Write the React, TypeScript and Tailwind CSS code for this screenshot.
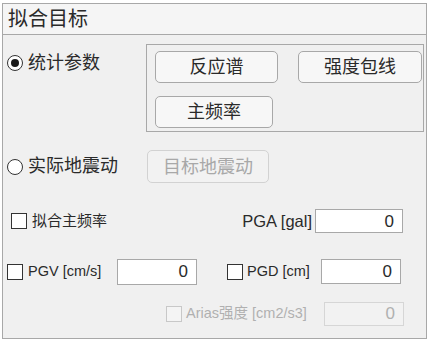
import React from 'react';

const font = "font-['Liberation_Sans','Noto_Sans_CJK_SC',sans-serif]";

function Radio({ checked }: { checked?: boolean }) {
  return (
    <div className="w-[16px] h-[16px] rounded-full border border-[#333] bg-white flex items-center justify-center shrink-0">
      {checked && <div className="w-[8px] h-[8px] rounded-full bg-[#1a1a1a]" />}
    </div>
  );
}

function Check({ disabled }: { disabled?: boolean }) {
  return (
    <div
      className={
        'w-[16px] h-[16px] border shrink-0 ' +
        (disabled ? 'border-[#c8c8c8] bg-[#f4f4f4]' : 'border-[#333] bg-white')
      }
    />
  );
}

function Btn({ label, w, h = 32, disabled }: { label: string; w: number; h?: number; disabled?: boolean }) {
  return (
    <div
      style={{ width: w, height: h }}
      className={
        'rounded-[5px] border flex items-center justify-center text-[18px] leading-none ' +
        (disabled ? 'border-[#d2d2d2] text-[#a8a8a8] bg-[#f2f2f2]' : 'border-[#a8a8a8] text-[#2a2a2a] bg-[#f7f7f7]')
      }
    >
      {label}
    </div>
  );
}

function Field({ w, h = 25, disabled }: { w: number; h?: number; disabled?: boolean }) {
  return (
    <div
      style={{ width: w, height: h }}
      className={
        'border flex items-center justify-end pr-[8px] text-[17px] ' +
        (disabled ? 'border-[#d6d6d6] bg-[#f2f2f2] text-[#b0b0b0]' : 'border-[#a8a8a8] bg-white text-[#2a2a2a]')
      }
    >
      0
    </div>
  );
}

export default function App() {
  return (
    <div className={`w-[435px] h-[342px] bg-white pt-[3px] pl-[2px] ${font}`}>
      <div className="w-[425px] h-[336px] border border-[#a8a8a8] bg-[#f0f0f0] flex flex-col">
        {/* header */}
        <div className="h-[31px] border-b border-[#a8a8a8] bg-[#f5f5f5] px-[5px] flex items-center text-[20px] text-[#2a2a2a]">
          拟合目标
        </div>

        {/* 统计参数 */}
        <div className="flex pt-[9px]">
          <div className="w-[143px] flex items-start pl-[4px] pt-[11px] gap-[5px]">
            <Radio checked />
            <span className="text-[18px] leading-[16px] text-[#2a2a2a]">统计参数</span>
          </div>
          <div className="w-[278px] h-[88px] border border-[#a8a8a8] pl-[8px] pt-[6px] flex flex-col gap-[13px]">
            <div className="flex gap-[20px]">
              <Btn label="反应谱" w={123} />
              <Btn label="强度包线" w={124} />
            </div>
            <Btn label="主频率" w={118} />
          </div>
        </div>

        {/* 实际地震动 */}
        <div className="flex items-center mt-[18px]">
          <div className="w-[144px] flex items-center pl-[4px] gap-[5px]">
            <Radio />
            <span className="text-[18px] text-[#2a2a2a]">实际地震动</span>
          </div>
          <Btn label="目标地震动" w={122} h={33} disabled />
        </div>

        {/* PGA */}
        <div className="flex items-center mt-[26px] pl-[8px] text-[#2a2a2a]">
          <Check />
          <span className="ml-[5px] text-[15px]">拟合主频率</span>
          <span className="ml-auto mr-[3px] text-[16.5px]">PGA [gal]</span>
          <div className="mr-[23px]">
            <Field w={88} h={24} />
          </div>
        </div>

        {/* PGV / PGD */}
        <div className="flex items-center mt-[25px] pl-[4px] text-[#2a2a2a] text-[14.5px]">
          <Check />
          <span className="ml-[5px] w-[89px]">PGV [cm/s]</span>
          <Field w={80} h={26} />
          <div className="ml-[30px]">
            <Check />
          </div>
          <span className="ml-[4px] w-[74px]">PGD [cm]</span>
          <Field w={80} h={25} />
        </div>

        {/* Arias */}
        <div className="flex items-center mt-[17px] pl-[163px] text-[14.5px] text-[#b0b0b0]">
          <Check disabled />
          <span className="ml-[4px] w-[138px] whitespace-nowrap">Arias强度 [cm2/s3]</span>
          <Field w={80} h={24} disabled />
        </div>
      </div>
    </div>
  );
}
